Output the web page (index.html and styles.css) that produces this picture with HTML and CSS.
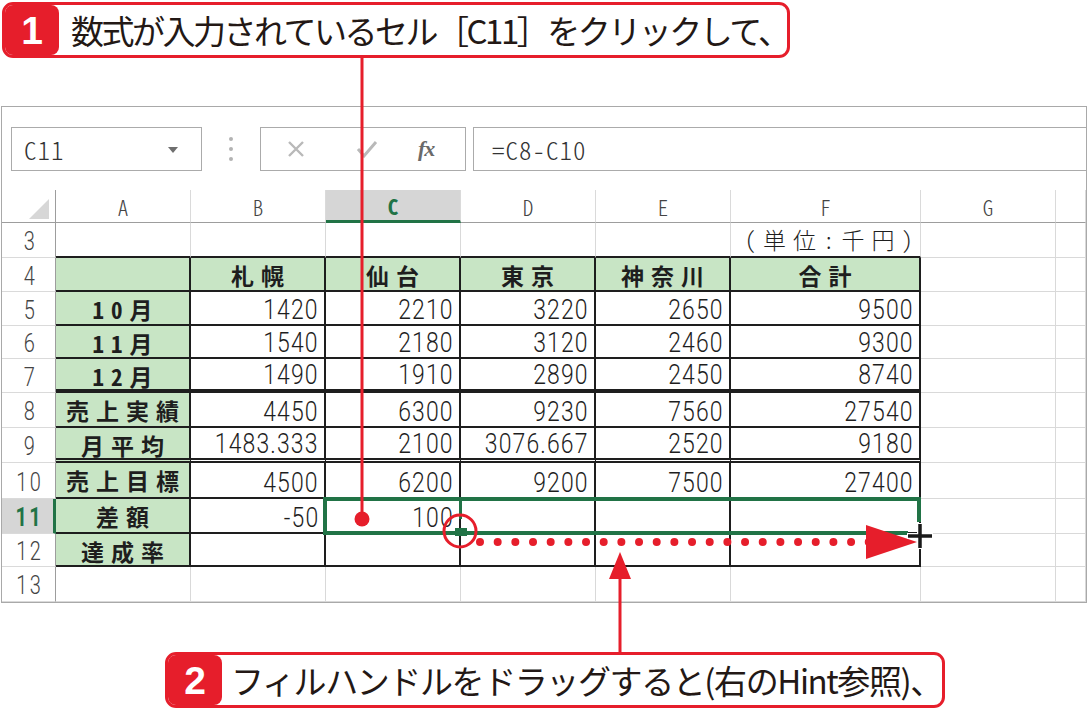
FILE: index.html
```html
<!DOCTYPE html>
<html lang="ja">
<head>
<meta charset="utf-8">
<title>Excel fill handle</title>
<link rel="stylesheet" href="styles.css">
</head>
<body>
<div class="page">
  <div class="callout c1">
    <span class="badge">1</span>
    <span class="ctext">数式が入力されているセル［C11］をクリックして、</span>
  </div>

  <div class="sheet">
    <div class="fbar">
      <div class="namebox">
        <span class="nbtext">C11</span>
        <svg class="dd" width="10" height="6" viewBox="0 0 10 6"><path d="M0 0H10L5 6Z" fill="#6f6f6f"/></svg>
      </div>
      <svg class="vdots" width="6" height="26" viewBox="0 0 6 26"><circle cx="3" cy="3" r="2" fill="#b3b3b3"/><circle cx="3" cy="13" r="2" fill="#b3b3b3"/><circle cx="3" cy="23" r="2" fill="#b3b3b3"/></svg>
      <div class="fxbox">
        <svg class="ico" width="20" height="20" viewBox="0 0 20 20"><path d="M3 3L17 17M17 3L3 17" stroke="#b9b9b9" stroke-width="2.4" fill="none"/></svg>
        <svg class="ico chk" width="22" height="20" viewBox="0 0 22 20"><path d="M2 10L8 17L20 3" stroke="#b9b9b9" stroke-width="3" fill="none"/></svg>
        <span class="fx">fx</span>
      </div>
      <div class="formula">=C8-C10</div>
    </div>

    <div class="grid">
      <!-- header -->
      <div class="h corner"><svg width="20" height="20" viewBox="0 0 20 20"><path d="M20 0V20H0Z" fill="#d7d7d7"/></svg></div>
      <div class="h ch">A</div>
      <div class="h ch">B</div>
      <div class="h ch selc">C</div>
      <div class="h ch">D</div>
      <div class="h ch">E</div>
      <div class="h ch">F</div>
      <div class="h ch">G</div>
      <div class="h ch"></div>

      <!-- row 3 -->
      <div class="rh"><span>3</span></div>
      <div class="c tt"></div><div class="c tt"></div><div class="c tt"></div><div class="c tt"></div><div class="c tt"></div>
      <div class="c tt unit">(単位：千円)</div>
      <div class="c"></div><div class="c"></div>

      <!-- row 4 -->
      <div class="rh"><span>4</span></div>
      <div class="c t g"></div>
      <div class="c t g lb">札幌</div>
      <div class="c t g lb">仙台</div>
      <div class="c t g lb">東京</div>
      <div class="c t g lb">神奈川</div>
      <div class="c t g lb">合計</div>
      <div class="c"></div><div class="c"></div>

      <!-- row 5 -->
      <div class="rh"><span>5</span></div>
      <div class="c t g lb">10月</div>
      <div class="c t n"><span>1420</span></div><div class="c t n"><span>2210</span></div><div class="c t n"><span>3220</span></div><div class="c t n"><span>2650</span></div><div class="c t n"><span>9500</span></div>
      <div class="c"></div><div class="c"></div>

      <!-- row 6 -->
      <div class="rh"><span>6</span></div>
      <div class="c t g lb">11月</div>
      <div class="c t n"><span>1540</span></div><div class="c t n"><span>2180</span></div><div class="c t n"><span>3120</span></div><div class="c t n"><span>2460</span></div><div class="c t n"><span>9300</span></div>
      <div class="c"></div><div class="c"></div>

      <!-- row 7 -->
      <div class="rh"><span>7</span></div>
      <div class="c t thick g lb">12月</div>
      <div class="c t thick n"><span>1490</span></div><div class="c t thick n"><span>1910</span></div><div class="c t thick n"><span>2890</span></div><div class="c t thick n"><span>2450</span></div><div class="c t thick n"><span>8740</span></div>
      <div class="c"></div><div class="c"></div>

      <!-- row 8 -->
      <div class="rh"><span>8</span></div>
      <div class="c t g lb">売上実績</div>
      <div class="c t n"><span>4450</span></div><div class="c t n"><span>6300</span></div><div class="c t n"><span>9230</span></div><div class="c t n"><span>7560</span></div><div class="c t n"><span>27540</span></div>
      <div class="c"></div><div class="c"></div>

      <!-- row 9 -->
      <div class="rh"><span>9</span></div>
      <div class="c t dbl g lb">月平均</div>
      <div class="c t dbl n"><span>1483.333</span></div><div class="c t dbl n"><span>2100</span></div><div class="c t dbl n"><span>3076.667</span></div><div class="c t dbl n"><span>2520</span></div><div class="c t dbl n"><span>9180</span></div>
      <div class="c"></div><div class="c"></div>

      <!-- row 10 -->
      <div class="rh"><span>10</span></div>
      <div class="c t g lb">売上目標</div>
      <div class="c t n"><span>4500</span></div><div class="c t n"><span>6200</span></div><div class="c t n"><span>9200</span></div><div class="c t n"><span>7500</span></div><div class="c t n"><span>27400</span></div>
      <div class="c"></div><div class="c"></div>

      <!-- row 11 -->
      <div class="rh selr"><span>11</span></div>
      <div class="c t g lb">差額</div>
      <div class="c t n"><span>-50</span></div><div class="c t n"><span>100</span></div><div class="c t n"></div><div class="c t n"></div><div class="c t n"></div>
      <div class="c"></div><div class="c"></div>

      <!-- row 12 -->
      <div class="rh"><span>12</span></div>
      <div class="c t g lb">達成率</div>
      <div class="c t"></div><div class="c t"></div><div class="c t"></div><div class="c t"></div><div class="c t"></div>
      <div class="c"></div><div class="c"></div>

      <!-- row 13 -->
      <div class="rh"><span>13</span></div>
      <div class="c"></div><div class="c"></div><div class="c"></div><div class="c"></div><div class="c"></div><div class="c"></div><div class="c"></div><div class="c"></div>
    </div>
  </div>

  <div class="callout c2">
    <span class="badge">2</span>
    <span class="ctext t2">フィルハンドルをドラッグすると(右のHint参照)、</span>
  </div>

  <svg class="annot" width="1087" height="710" viewBox="0 0 1087 710">
    <!-- selection outline -->
    <g fill="#217346">
      <rect x="323" y="497" width="598" height="4"/>
      <rect x="323" y="497" width="4" height="38"/>
      <rect x="323" y="531" width="585" height="4"/>
      <rect x="917" y="497" width="4" height="25"/>
      <rect x="459" y="499" width="3" height="20"/>
      <rect x="455" y="528" width="12" height="8"/>
    </g>
    <!-- callout 1 leader -->
    <line x1="362" y1="57" x2="362" y2="519" stroke="#e61e2b" stroke-width="3"/>
    <circle cx="362" cy="519" r="7.5" fill="#e61e2b"/>
    <!-- fill handle ring -->
    <circle cx="460" cy="531" r="16" fill="none" stroke="#e61e2b" stroke-width="3"/>
    <!-- dotted drag path -->
    <line x1="480" y1="542" x2="870" y2="542" stroke="#e61e2b" stroke-width="8" stroke-linecap="round" stroke-dasharray="0 17.67"/>
    <path d="M866 525L866 559L917 542Z" fill="#e61e2b"/>
    <!-- cross cursor -->
    <path d="M907 536H933M920 523V549" stroke="#fff" stroke-width="6" fill="none"/>
    <path d="M908 536H932M920 524V548" stroke="#1a1a1a" stroke-width="3.5" fill="none"/>
    <!-- callout 2 leader -->
    <line x1="620" y1="575" x2="620" y2="653" stroke="#e61e2b" stroke-width="3"/>
    <path d="M620 552L609 579H631Z" fill="#e61e2b"/>
  </svg>
</div>
</body>
</html>
```

FILE: styles.css
```css
html, body {
  margin: 0;
  padding: 0;
  background: #fff;
}

.page {
  position: relative;
  width: 1087px;
  height: 710px;
  overflow: hidden;
  font-family: "Noto Sans CJK JP", "Noto Sans", sans-serif;
  color: #231815;
}

/* ---------- callouts ---------- */
.callout {
  display: flex;
  align-items: stretch;
  box-sizing: border-box;
  height: 56px;
  border: 3px solid #e61e2b;
  border-radius: 11px;
  background: #fff;
}
.c1 {
  margin: 2px 0 0 2px;
  width: 788px;
}
.c2 {
  margin: 49px 0 0 165px;
  width: 780px;
}
.badge {
  flex: 0 0 54px;
  display: flex;
  align-items: center;
  justify-content: center;
  background: #e61e2b;
  color: #fff;
  border-radius: 8px;
  font-family: "Liberation Sans", Arial, sans-serif;
  font-weight: bold;
  font-size: 39px;
  line-height: 1;
}
.ctext {
  display: flex;
  align-items: center;
  padding-left: 12px;
  font-size: 33px;
  letter-spacing: -2.5px;
  line-height: 1;
  white-space: nowrap;
  color: #231815;
}
.t2 {
  padding-left: 9px;
  letter-spacing: -1.4px;
}

/* ---------- sheet ---------- */
.sheet {
  margin: 48px 0 0 1px;
  width: 1086px;
  box-sizing: border-box;
  border: 1px solid #a9a9a9;
  background: #fff;
}

.fbar {
  display: flex;
  align-items: center;
  height: 44px;
  margin-top: 20px;
  padding-left: 9px;
}
.namebox {
  box-sizing: border-box;
  width: 191px;
  height: 44px;
  border: 1px solid #ababab;
  display: flex;
  align-items: center;
  justify-content: space-between;
  padding: 0 23px 0 12px;
}
.nbtext,
.formula {
  font-family: "Noto Sans CJK JP", sans-serif;
  font-feature-settings: "hwid";
  font-weight: 300;
  font-size: 25px;
  color: #333;
  letter-spacing: 1px;
}
.dd {
  margin-top: 2px;
}
.vdots {
  margin: 0 26px 0 26px;
}
.fxbox {
  box-sizing: border-box;
  width: 206px;
  height: 44px;
  border: 1px solid #ababab;
  display: flex;
  align-items: center;
  padding-left: 25px;
}
.ico {
  flex: none;
}
.chk {
  margin-left: 50px;
}
.fx {
  margin-left: 40px;
  font-family: "Liberation Serif", "DejaVu Serif", serif;
  font-style: italic;
  font-weight: bold;
  font-size: 22px;
  color: #6a6a6a;
  letter-spacing: -1px;
}
.formula {
  flex: 1;
  box-sizing: border-box;
  height: 44px;
  margin-left: 7px;
  border: 1px solid #ababab;
  border-right: none;
  display: flex;
  align-items: center;
  padding-left: 18px;
}

/* ---------- grid ---------- */
.grid {
  display: grid;
  margin-top: 19px;
  grid-template-columns: 54px 135px 135px 135px 135px 135px 190px 135px 1fr;
  grid-template-rows: 33px 35px 34px 34px 33px 34px 35px 35px 36px 35px 33px 35px;
  font-family: "Noto Sans CJK JP", sans-serif;
  font-feature-settings: "hwid";
}

.h {
  box-sizing: border-box;
  border-bottom: 1px solid #9d9d9d;
  border-right: 1px solid #dadada;
  display: flex;
  align-items: center;
  justify-content: center;
  font-size: 21px;
  font-weight: 300;
  color: #444;
  line-height: 1;
  padding-top: 2px;
}
.corner {
  border-right: 1px solid #9d9d9d;
  justify-content: flex-end;
  align-items: flex-end;
  padding: 0 6px 3px 0;
}
.corner svg {
  display: block;
}
.selc {
  background: #d6d6d6;
  color: #217346;
  font-weight: 700;
  border-bottom: 3px solid #217346;
}

.rh {
  box-sizing: border-box;
  border-right: 1px solid #9d9d9d;
  border-bottom: 1px solid #dadada;
  display: flex;
  align-items: center;
  justify-content: center;
  font-family: Roboto, "Liberation Sans", sans-serif;
  font-weight: 300;
  font-size: 25px;
  letter-spacing: 3px;
  color: #444;
  line-height: 1;
  padding: 3px 0 0 3px;
}
.rh span {
  display: inline-block;
  transform: scaleX(0.8);
}
.selr {
  background: #d6d6d6;
  color: #217346;
  font-weight: 700;
  border-right: 3px solid #217346;
}

.c {
  box-sizing: border-box;
  border-right: 1px solid #d9d9d9;
  border-bottom: 1px solid #d9d9d9;
  display: flex;
  align-items: flex-end;
  white-space: nowrap;
  line-height: 1;
  color: #1e1e1e;
}
.tt {
  border-bottom: 2px solid #1e1e1e;
}
.t {
  border-right: 2px solid #1e1e1e;
  border-bottom: 2px solid #1e1e1e;
}
.thick {
  border-bottom: 4px solid #1e1e1e;
}
.dbl {
  border-bottom: 5px double #1e1e1e;
}
.g {
  background: #c8e5c5;
}
.n {
  justify-content: flex-end;
  padding: 0 5px 0 0;
  font-family: Roboto, "Liberation Sans", sans-serif;
  font-weight: 300;
  font-size: 28px;
  letter-spacing: 1.4px;
  line-height: 28px;
}
.n span {
  display: inline-block;
  transform: scaleX(0.82);
  transform-origin: 100% 50%;
}
.lb {
  justify-content: center;
  align-items: flex-start;
  padding: 1px 0 0 7px;
  font-size: 23px;
  font-weight: 700;
  letter-spacing: 7px;
  line-height: 33px;
}
.unit {
  justify-content: flex-end;
  padding: 0;
  font-size: 23px;
  font-weight: 300;
  letter-spacing: 7px;
  line-height: 33px;
}

/* ---------- annotations ---------- */
.annot {
  position: absolute;
  left: 0;
  top: 0;
  pointer-events: none;
}
```
